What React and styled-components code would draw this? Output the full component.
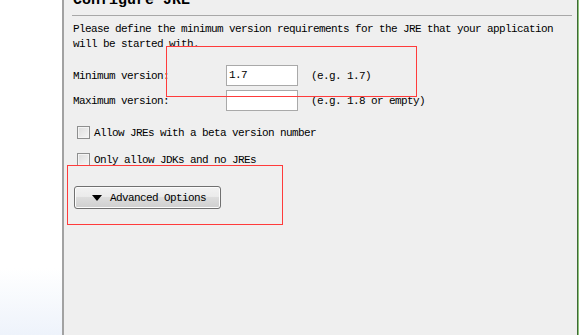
import React from 'react';
import styled, { createGlobalStyle } from 'styled-components';

const GlobalStyle = createGlobalStyle`
  html, body {
    margin: 0;
    padding: 0;
    overflow: hidden;
  }
  body {
    background: #ffffff;
    font-family: "Liberation Mono", "DejaVu Sans Mono", monospace;
  }
`;

const Frame = styled.div`
  position: relative;
  display: flex;
  width: 579px;
  height: 335px;
  overflow: hidden;
`;

const Sidebar = styled.div`
  width: 62px;
  flex: none;
  background: linear-gradient(to bottom, #ffffff 0px, #ffffff 268px, #eef3fb 335px);
  border-right: 2px solid #a2a2a2;
`;

const Panel = styled.div`
  flex: 1;
  background: #efefef;
  padding: 0 5px 0 9px;
  border-right: 1px solid #3d6a35;
  box-shadow: inset -0px 0 0 #000;
  display: flex;
  flex-direction: column;
`;

const EdgeStrip = styled.div`
  width: 1px;
  flex: none;
  background: #8fc27a;
`;

const Title = styled.h1`
  margin: -7px 0 0 0;
  height: 16px;
  font-size: 15px;
  line-height: 16px;
  font-weight: bold;
  color: #000;
`;

const Separator = styled.div`
  margin: 6px 0 0 -1px;
  height: 1px;
  background: #a8a8a8;
`;

const Description = styled.p`
  margin: 6px 0 0 0;
  font-size: 11px;
  letter-spacing: -0.6px;
  line-height: 15px;
  color: #000;
  width: 490px;
`;

const Rows = styled.div`
  display: flex;
  flex-direction: column;
  gap: 4px;
  margin-top: 13px;
`;

const Row = styled.div`
  display: flex;
  align-items: center;
  height: 21px;
`;

const Label = styled.span`
  width: 153px;
  font-size: 11px;
  letter-spacing: -0.6px;
  color: #000;
`;

const Input = styled.div`
  box-sizing: border-box;
  width: 72px;
  height: 21px;
  background: #fff;
  border: 1px solid #a9a9a9;
  padding: 0 0 0 2px;
  font-size: 11px;
  letter-spacing: -0.6px;
  line-height: 19px;
  color: #000;
`;

const Hint = styled.span`
  margin-left: 13px;
  font-size: 11px;
  letter-spacing: -0.6px;
  color: #000;
`;

const Checks = styled.div`
  display: flex;
  flex-direction: column;
  gap: 14px;
  margin-top: 15px;
`;

const CheckRow = styled.label`
  display: flex;
  align-items: center;
  gap: 4px;
  margin-left: 4px;
  height: 13px;
  font-size: 11px;
  letter-spacing: -0.6px;
  color: #000;
`;

const Box = styled.span`
  box-sizing: border-box;
  width: 13px;
  height: 13px;
  border: 1px solid #8e8f8f;
  background: linear-gradient(135deg, #dcdcdc, #f6f6f6);
  box-shadow: inset 0 0 0 1px #f4f4f4;
`;

const Button = styled.button`
  box-sizing: border-box;
  margin: 20px 0 0 1px;
  width: 147px;
  height: 23px;
  display: flex;
  align-items: center;
  padding: 0 0 0 17px;
  gap: 8px;
  border: 1px solid #707070;
  border-radius: 3px;
  background: linear-gradient(to bottom, #f2f2f2 0%, #ebebeb 45%, #dddddd 50%, #cfcfcf 100%);
  box-shadow: inset 0 0 0 1px #fcfcfc;
  font-family: "Liberation Mono", "DejaVu Sans Mono", monospace;
  font-size: 11px;
  letter-spacing: -0.6px;
  color: #000;
`;

const Triangle = styled.span`
  width: 0;
  height: 0;
  border-left: 5px solid transparent;
  border-right: 5px solid transparent;
  border-top: 6px solid #000;
`;

const Mark = styled.div`
  position: absolute;
  box-sizing: border-box;
  border: 1.5px solid #ff3b3b;
  pointer-events: none;
`;

const marks = [
  { left: 166, top: 46, width: 251, height: 51 },
  { left: 67, top: 165, width: 216, height: 60 },
];

export default function App() {
  return (
    <>
      <GlobalStyle />
      <Frame>
        <Sidebar />
        <Panel>
          <Title>Configure JRE</Title>
          <Separator />
          <Description>
            Please define the minimum version requirements for the JRE that your application will be started with.
          </Description>
          <Rows>
            <Row>
              <Label>Minimum version:</Label>
              <Input>1.7</Input>
              <Hint>(e.g. 1.7)</Hint>
            </Row>
            <Row>
              <Label>Maximum version:</Label>
              <Input />
              <Hint>(e.g. 1.8 or empty)</Hint>
            </Row>
          </Rows>
          <Checks>
            <CheckRow>
              <Box />
              Allow JREs with a beta version number
            </CheckRow>
            <CheckRow>
              <Box />
              Only allow JDKs and no JREs
            </CheckRow>
          </Checks>
          <Button>
            <Triangle />
            Advanced Options
          </Button>
        </Panel>
        <EdgeStrip />
        {marks.map((m, i) => (
          <Mark key={i} style={m} />
        ))}
      </Frame>
    </>
  );
}
